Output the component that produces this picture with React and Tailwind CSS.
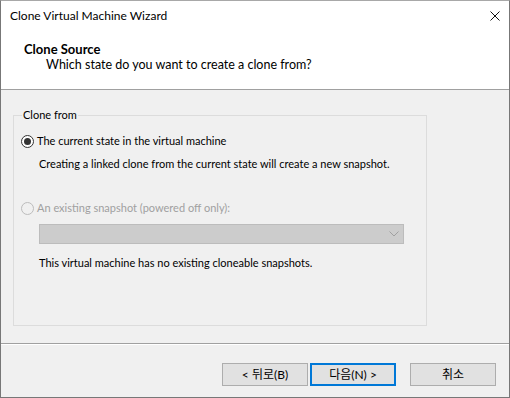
import React from "react";

const font = { fontFamily: 'Lato, "Noto Sans CJK KR", sans-serif' };

function Radio({ checked, disabled }) {
  return (
    <span
      className={`flex h-[13px] w-[13px] shrink-0 items-center justify-center rounded-full border ${
        disabled ? "border-[#bcbcbc] bg-[#f0f0f0]" : "border-[#333333] bg-white"
      }`}
    >
      {checked && <span className="h-[7px] w-[7px] rounded-full bg-[#333333]" />}
    </span>
  );
}

function Button({ children, primary }) {
  return (
    <button
      className={`h-[23px] w-[86px] bg-[#e1e1e1] text-[12px] text-black ${
        primary ? "border-2 border-[#0078d7]" : "border border-[#adadad]"
      }`}
    >
      {children}
    </button>
  );
}

export default function App() {
  return (
    <div
      className="flex h-[398px] w-[510px] flex-col border border-t-[#a8a8a8] border-x-[#777777] border-b-[#777777] bg-[#f0f0f0] text-[11px] leading-[16px] text-black"
      style={font}
    >
      {/* ===== TITLE + HEADER ===== */}
      <div className="h-[88px] shrink-0 bg-white">
        <div className="flex h-[30px] items-center justify-between pl-[9px] pr-[9px] text-[12px]">
          <span>Clone Virtual Machine Wizard</span>
          <svg width="10" height="10" viewBox="0 0 10 10">
            <path d="M0.5 0.5 L9.5 9.5 M9.5 0.5 L0.5 9.5" stroke="#111" strokeWidth="1" />
          </svg>
        </div>
        <div className="pl-[23px] pt-[10px]">
          <div className="text-[13px] font-bold">Clone Source</div>
          <div className="pl-[22px] text-[12.5px]">Which state do you want to create a clone from?</div>
        </div>
      </div>
      <div className="h-px shrink-0 bg-[#a0a0a0]" />

      {/* ===== BODY ===== */}
      <div className="flex-1 pl-[12px] pt-[17px]">
        <fieldset className="m-0 h-[219px] w-[414px] border border-[#dcdcdc] px-[7px] pb-0 pt-0">
          <legend className="ml-[1px] px-[1px]">Clone from</legend>

          <div className="mt-[10px] flex items-center gap-[3px]">
            <Radio checked />
            <span>The current state in the virtual machine</span>
          </div>
          <div className="ml-[18px] mt-[7px]">
            Creating a linked clone from the current state will create a new snapshot.
          </div>

          <div className="mt-[28px] flex items-center gap-[3px] text-[#a0a0a0]">
            <Radio disabled />
            <span>An existing snapshot (powered off only):</span>
          </div>
          <div className="ml-[18px] mt-[8px] flex h-[20px] w-[365px] items-center justify-end border border-[#bcbcbc] bg-[#cccccc] pr-[4px]">
            <svg width="10" height="6" viewBox="0 0 10 6">
              <path d="M0.5 0.5 L5 5 L9.5 0.5" fill="none" stroke="#a0a0a0" strokeWidth="1" />
            </svg>
          </div>
          <div className="ml-[18px] mt-[11px]">
            This virtual machine has no existing cloneable snapshots.
          </div>
        </fieldset>
      </div>

      {/* ===== FOOTER ===== */}
      <div className="h-px shrink-0 bg-[#a0a0a0]" />
      <div className="h-px shrink-0 bg-white" />
      <div className="flex h-[52px] shrink-0 items-start justify-end gap-[14px] pr-[13px] pt-[18px]">
        <div className="flex gap-[2px]">
          <Button>&lt; 뒤로(B)</Button>
          <Button primary>다음(N) &gt;</Button>
        </div>
        <Button>취소</Button>
      </div>
    </div>
  );
}
